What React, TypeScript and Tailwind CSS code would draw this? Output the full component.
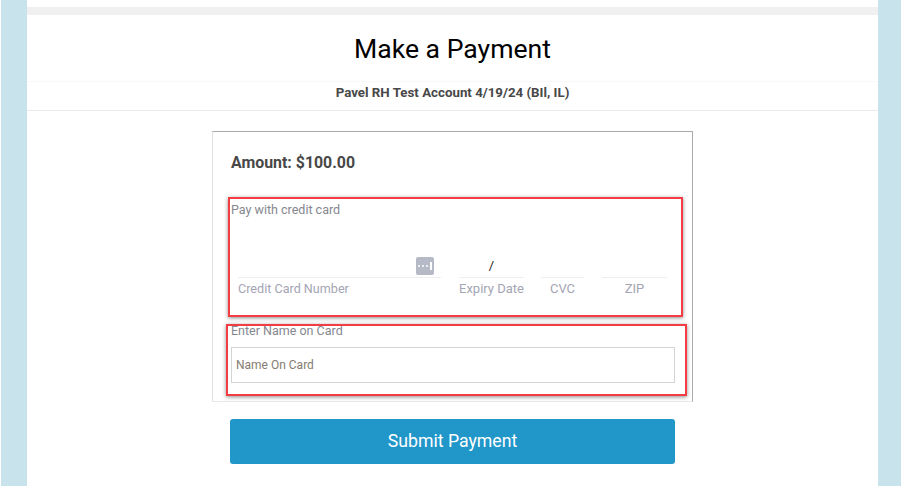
const font = "font-['Roboto',sans-serif]";

function CardChip() {
  return (
    <div className="flex h-[18px] w-[18px] items-center justify-center gap-[2px] rounded-[2px] bg-[#b5bac6]">
      <span className="h-[2px] w-[2px] rounded-full bg-white" />
      <span className="h-[2px] w-[2px] rounded-full bg-white" />
      <span className="h-[2px] w-[2px] rounded-full bg-white" />
      <span className="h-[8px] w-[1.5px] bg-white" />
    </div>
  );
}

function CardField({ label, width, value }: { label: string; width: string; value?: string }) {
  return (
    <div className={width}>
      <div className="flex h-[20px] items-center justify-center border-b border-[#eeeeee] pb-[4px] text-[13px] leading-none text-[#222222]">
        {value}
      </div>
      <div className="mt-[3px] text-center text-[13px] leading-[16px] text-[#a3a5b3]">{label}</div>
    </div>
  );
}

export default function App() {
  return (
    <div className={`${font} h-[486px] w-[902px] overflow-hidden bg-white`}>
      <div className="mx-[1px] flex h-full bg-[#c8e3ec] pl-[26px] pr-[23px]">
        <main className="h-full w-[851px] bg-white">
          <div className="h-[7px]" />
          <div className="h-[8px] bg-[#f0f0f0]" />
          <h1 className="h-[66px] pt-[16px] text-center text-[26.6px] leading-[35px] text-[#000000]">Make a Payment</h1>
          <div className="flex h-[30px] items-center justify-center border-y border-t-[#f8f8f8] border-b-[#ebebeb] pb-[6px] text-[13.3px] font-bold text-[#484848]">
            Pavel RH Test Account 4/19/24 (BIl, IL)
          </div>

          <div className="ml-[185px] mt-[20px] h-[271px] w-[481px] border border-t-[#aaaaaa] border-r-[#aaaaaa] border-b-[#e8e8e8] border-l-[#e2e2e2] pl-[18px] pt-[21px]">
            <div className="text-[15.9px] font-bold leading-[20px] text-[#484848]">Amount: $100.00</div>

            <section className="relative mt-[24px] h-[118px]">
              <div className="pt-[5px] text-[12.5px] leading-[15px] text-[#85878f]">Pay with credit card</div>
              <div className="ml-[7px] mt-[41px] flex items-start">
                <div className="w-[203px]">
                  <div className="flex h-[20px] justify-end border-b border-[#eeeeee] pr-[7px]">
                    <div className="-mt-[1px] h-[18px]">
                      <CardChip />
                    </div>
                  </div>
                  <div className="mt-[3px] text-[12.6px] leading-[16px] text-[#a3a5b3]">Credit Card Number</div>
                </div>
                <div className="ml-[18px]">
                  <CardField label="Expiry Date" width="w-[65px]" value="/" />
                </div>
                <div className="ml-[17px]">
                  <CardField label="CVC" width="w-[43px]" />
                </div>
                <div className="ml-[18px]">
                  <CardField label="ZIP" width="w-[65px]" />
                </div>
              </div>
              <div className="pointer-events-none absolute -left-[3px] top-0 h-[120px] w-[455px] border-2 border-[#f33c44] shadow-[0_1px_4px_rgba(0,0,0,0.45)]" />
            </section>

            <section className="relative mt-[10px] h-[70px]">
              <div className="text-[12.5px] leading-[12px] text-[#85878f]">Enter Name on Card</div>
              <div className="mt-[10px] flex h-[36px] w-[444px] items-center border border-[#d4d4d4] pl-[4px] text-[12px] text-[#857c6f]">
                Name On Card
              </div>
              <div className="pointer-events-none absolute -left-[5px] -top-[1px] h-[72px] w-[461px] border-2 border-[#f33c44] shadow-[0_1px_4px_rgba(0,0,0,0.45)]" />
            </section>
          </div>

          <button className="ml-[203px] mt-[17px] h-[45px] w-[445px] rounded-[3px] bg-[#2196c9] text-[17.7px] text-white">
            Submit Payment
          </button>
        </main>
      </div>
    </div>
  );
}
